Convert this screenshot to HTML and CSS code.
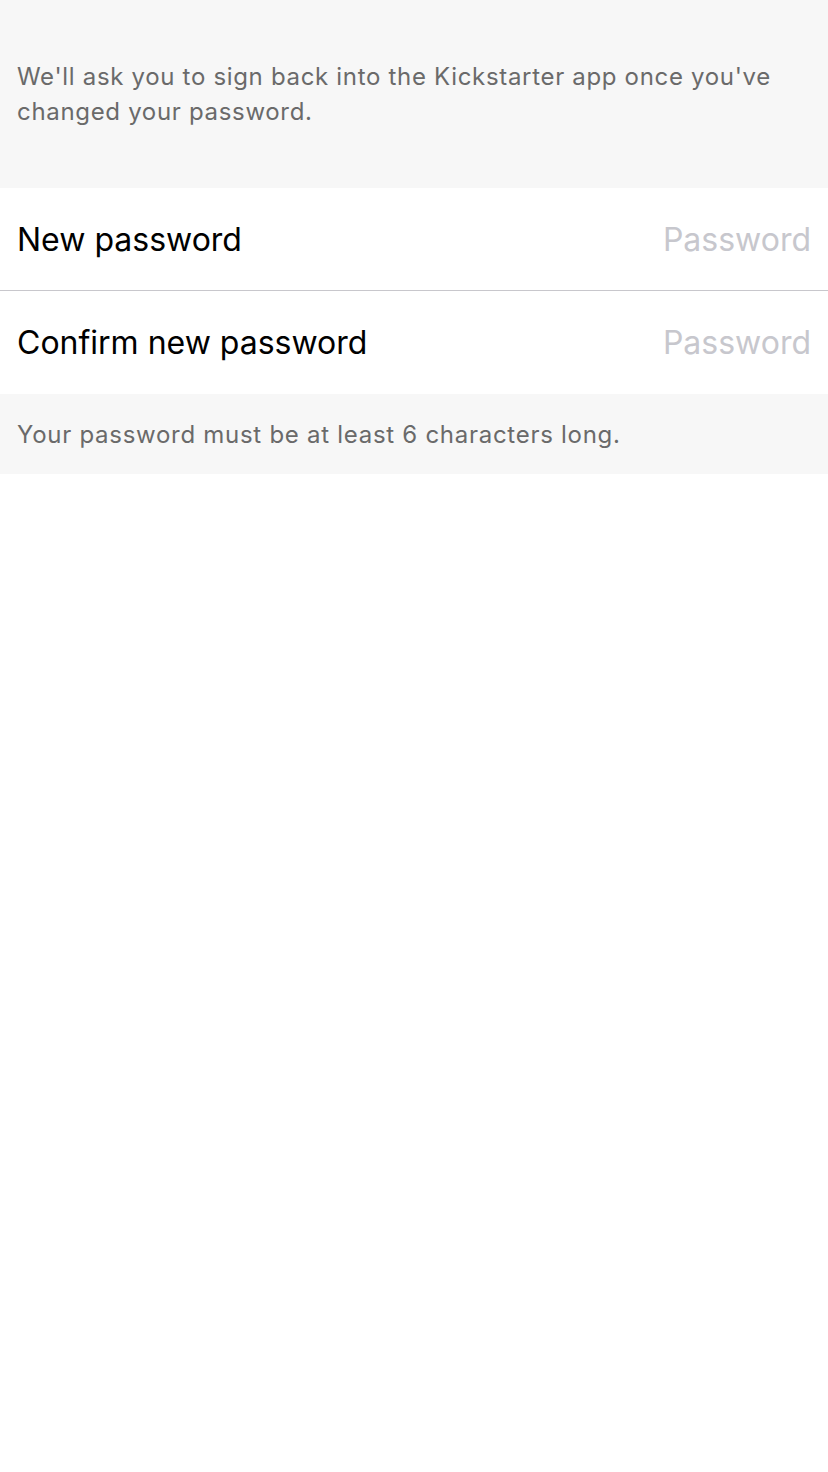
FILE: index.html
```html
<!DOCTYPE html>
<html>
<head>
<meta charset="utf-8">
<link rel="stylesheet" href="styles.css">
</head>
<body>
<div class="page">
  <div class="header-note">
    <p>We'll ask you to sign back into the Kickstarter app once you've changed your password.</p>
  </div>
  <div class="form">
    <div class="row">
      <span class="label">New password</span>
      <span class="placeholder">Password</span>
    </div>
    <div class="row">
      <span class="label">Confirm new password</span>
      <span class="placeholder">Password</span>
    </div>
  </div>
  <div class="footer-note">
    <p>Your password must be at least 6 characters long.</p>
  </div>
</div>
</body>
</html>
```
FILE: styles.css
```css
html, body {
  margin: 0;
  padding: 0;
  background: #ffffff;
}
body {
  font-family: "Inter", "Noto Sans", sans-serif;
  width: 828px;
  height: 1472px;
}
.page {
  display: flex;
  flex-direction: column;
}
.header-note {
  background: #f7f7f7;
  height: 188px;
  box-sizing: border-box;
  padding: 59px 30px 0 17px;
}
.header-note p {
  margin: 0;
  font-size: 24px;
  letter-spacing: 0.68px;
  line-height: 35px;
  color: #6a6a6a;
}
.form {
  background: #ffffff;
}
.row {
  display: flex;
  align-items: center;
  justify-content: space-between;
  height: 102px;
  padding: 0 17px;
}
.row + .row {
  border-top: 1px solid #c8c7cc;
  height: 103px;
}
.label {
  font-size: 32px;
  color: #000000;
}
.placeholder {
  font-size: 32px;
  color: #c7c7cd;
}
.footer-note {
  background: #f7f7f7;
  height: 80px;
  box-sizing: border-box;
  padding: 0 17px;
  display: flex;
  align-items: center;
}
.footer-note p {
  margin: 0;
  font-size: 24px;
  letter-spacing: 0.72px;
  color: #6a6a6a;
}
```
